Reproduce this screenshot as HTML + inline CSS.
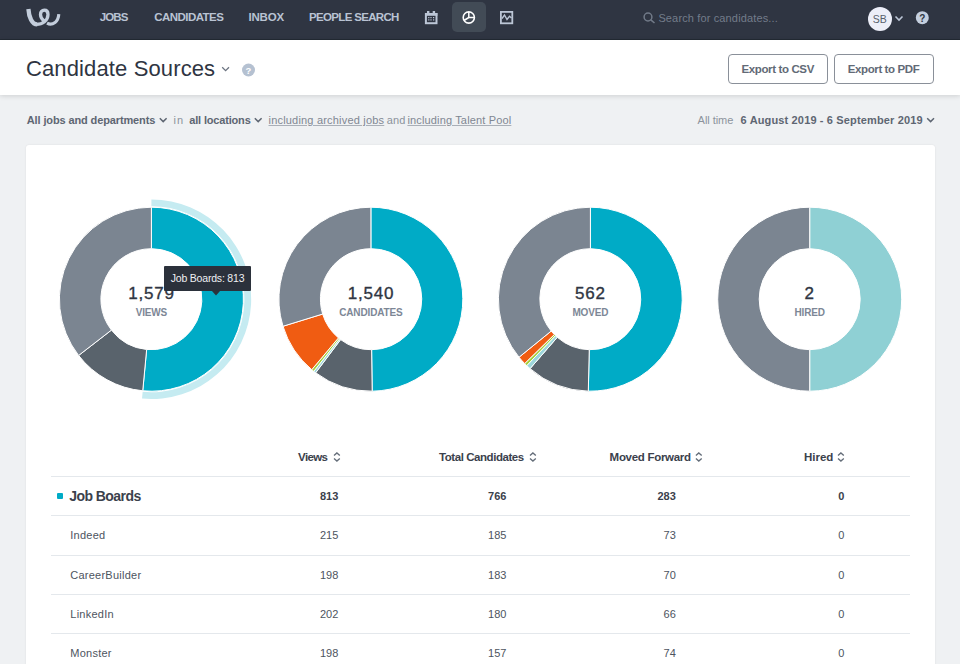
<!DOCTYPE html>
<html><head><meta charset="utf-8">
<style>
*{margin:0;padding:0;box-sizing:border-box}
html,body{width:960px;height:664px;overflow:hidden;background:#eff1f3;font-family:"Liberation Sans",sans-serif}
.a{position:absolute;white-space:nowrap;line-height:1}
#nav{position:absolute;left:0;top:0;width:960px;height:40px;background:#2f3542;border-bottom:1px solid #232a33}
#hdr{position:absolute;left:0;top:40px;width:960px;height:55px;background:#fff;box-shadow:0 1px 5px rgba(0,0,0,.14)}
.btn{position:absolute;top:54px;height:30px;border:1px solid #8a9099;border-radius:4px;background:#fff}
#card{position:absolute;left:26px;top:145.3px;width:908.5px;height:560px;background:#fff;border-radius:3px;box-shadow:0 0 2px rgba(0,0,0,.09)}
.rl{position:absolute;left:51px;width:859px;height:1px;background:#e4e8ec}
</style></head><body>
<div id="nav">
 <svg style="position:absolute;left:0;top:0" width="70" height="40" viewBox="0 0 70 40">
  <g fill="none" stroke="#c3cddb">
  <path d="M28.4,9 C28.9,17 32,24.4 37.2,24.4" stroke-width="4.3"/>
  <path d="M36.5,24.4 C42.5,24.4 48,20.5 48,14.5 C48,11.8 46.5,10.2 44.3,10.2 C42,10.2 40.5,12 40.5,14.5 C40.5,17 41.8,19 43.5,20.5" stroke-width="3.3"/>
  <path d="M47,23.2 C49,24.3 52.5,24.4 55,22.6 C57.2,20.8 58.6,17.8 58.8,14.2" stroke-width="3.1"/>
  </g>
 </svg>
 <svg style="position:absolute;left:420px;top:6px" width="24" height="24" viewBox="420 6 24 24">
  <rect x="425.9" y="14" width="10.6" height="9.2" fill="none" stroke="#bcc6d6" stroke-width="2"/>
  <rect x="425" y="13" width="12.4" height="2.8" fill="#bcc6d6"/>
  <rect x="427" y="11" width="2.4" height="2.5" fill="#bcc6d6"/>
  <rect x="432.7" y="11" width="2.4" height="2.5" fill="#bcc6d6"/>
  <g fill="#bcc6d6"><rect x="428.2" y="17" width="1.2" height="1.2"/><rect x="430.4" y="17" width="1.2" height="1.2"/><rect x="433" y="17" width="1.2" height="1.2"/><rect x="428.2" y="19.3" width="1.2" height="1.2"/><rect x="430.4" y="19.3" width="1.2" height="1.2"/><rect x="433" y="19.3" width="1.2" height="1.2"/></g>
 </svg>
 <div style="position:absolute;left:452px;top:2px;width:34px;height:30px;border-radius:5px;background:#424b56"></div>
 <svg style="position:absolute;left:452px;top:2px" width="34" height="30" viewBox="452 2 34 30">
  <circle cx="468.8" cy="17.5" r="5.6" fill="none" stroke="#fff" stroke-width="1.6"/>
  <path d="M468.8,11.9V17.5H474.4M468.8,17.5L464,20.5" fill="none" stroke="#fff" stroke-width="1.5"/>
 </svg>
 <svg style="position:absolute;left:496px;top:6px" width="22" height="24" viewBox="496 6 22 24">
  <rect x="500.9" y="11.9" width="11.4" height="11.4" fill="none" stroke="#bcc6d6" stroke-width="1.8"/>
  <path d="M502,18.5L504.5,15L507,19.5L509.5,16.2L511.5,18" fill="none" stroke="#bcc6d6" stroke-width="1.4"/>
 </svg>
 <svg style="position:absolute;left:640px;top:8px" width="20" height="20" viewBox="640 8 20 20">
  <circle cx="648" cy="17" r="3.9" fill="none" stroke="#717a88" stroke-width="1.5"/>
  <path d="M650.8,19.8L654.5,23" stroke="#717a88" stroke-width="1.6"/>
 </svg>
 <div style="position:absolute;left:868px;top:7px;width:24px;height:24px;border-radius:50%;background:#eceef8"></div>
 <svg style="position:absolute;left:890px;top:10px" width="44" height="20" viewBox="890 10 44 20">
  <path d="M895.5,16.5L899,20L902.5,16.5" fill="none" stroke="#bcc6d6" stroke-width="1.6"/>
  <circle cx="922.3" cy="17.7" r="6.5" fill="#c4cfdf"/>
  <text x="922.3" y="21.6" text-anchor="middle" font-family="Liberation Sans" font-weight="bold" font-size="10" fill="#2f3542">?</text>
 </svg>
<div class="a" style="left:99.8px;top:11.9px;font-size:11.5px;font-weight:bold;letter-spacing:-0.9px;color:#b9c3d3;">JOBS</div><div class="a" style="left:154.2px;top:11.9px;font-size:11.5px;font-weight:bold;letter-spacing:-0.544px;color:#b9c3d3;">CANDIDATES</div><div class="a" style="left:248.4px;top:11.9px;font-size:11.5px;font-weight:bold;letter-spacing:-0.163px;color:#b9c3d3;">INBOX</div><div class="a" style="left:309.0px;top:11.9px;font-size:11.5px;font-weight:bold;letter-spacing:-0.667px;color:#b9c3d3;">PEOPLE SEARCH</div><div class="a" style="left:658.4px;top:13.2px;font-size:11px;font-weight:normal;letter-spacing:0.139px;color:#737c8a;">Search for candidates...</div><div class="a" style="left:872.75px;top:14.3px;font-size:10.5px;font-weight:normal;letter-spacing:-0.05px;color:#575f6c;">SB</div>
</div>
<div id="hdr"></div>
<svg style="position:absolute;left:218px;top:62px" width="40" height="20" viewBox="218 62 40 20">
 <path d="M222.2,67.3L225.6,70.6L229,67.3" fill="none" stroke="#6b7380" stroke-width="1.3"/>
 <circle cx="248.5" cy="70" r="6.5" fill="#b5c1d1"/>
 <text x="248.5" y="73.8" text-anchor="middle" font-family="Liberation Sans" font-weight="bold" font-size="9.5" fill="#fff">?</text>
</svg>
<div class="btn" style="left:728px;width:100px"></div>
<div class="btn" style="left:834px;width:100px"></div>
<div class="a" style="left:26.0px;top:57.9px;font-size:22px;font-weight:normal;letter-spacing:0.125px;color:#2f3542;">Candidate Sources</div><div class="a" style="left:741.5px;top:63.7px;font-size:11.5px;font-weight:bold;letter-spacing:-0.375px;color:#626a76;">Export to CSV</div><div class="a" style="left:847.8px;top:63.7px;font-size:11.5px;font-weight:bold;letter-spacing:-0.4px;color:#626a76;">Export to PDF</div>
<div class="a" style="left:26.8px;top:115.1px;font-size:11px;font-weight:bold;letter-spacing:-0.126px;color:#5e6672;">All jobs and departments</div><div class="a" style="left:173.4px;top:115.1px;font-size:11px;font-weight:normal;letter-spacing:1.1px;color:#8c939c;">in</div><div class="a" style="left:189.3px;top:115.1px;font-size:11px;font-weight:bold;letter-spacing:-0.175px;color:#5e6672;">all locations</div><div class="a" style="left:268.5px;top:115.1px;font-size:11px;font-weight:normal;letter-spacing:0.195px;color:#7f8792;text-decoration:underline;text-decoration-color:#a9afb7;">including archived jobs</div><div class="a" style="left:386.8px;top:115.1px;font-size:11px;font-weight:normal;letter-spacing:0.05px;color:#8c939c;">and</div><div class="a" style="left:407.4px;top:115.1px;font-size:11px;font-weight:normal;letter-spacing:0.155px;color:#7f8792;text-decoration:underline;text-decoration-color:#a9afb7;">including Talent Pool</div><div class="a" style="left:697.6px;top:115.1px;font-size:11px;font-weight:normal;letter-spacing:-0.043px;color:#8c939c;">All time</div><div class="a" style="left:740.6px;top:115.1px;font-size:11px;font-weight:bold;letter-spacing:0.145px;color:#5e6672;">6 August 2019 - 6 September 2019</div>
<svg style="position:absolute;left:150px;top:110px" width="800" height="20" viewBox="150 110 800 20">
 <g fill="none" stroke="#5e6672" stroke-width="1.5">
 <path d="M159.8,118.3L163.2,121.6L166.6,118.3"/>
 <path d="M254.8,118.3L258.2,121.6L261.6,118.3"/>
 <path d="M927.2,118.3L930.6,121.6L934,118.3"/>
 </g>
</svg>
<div id="card"></div>
<svg style="position:absolute;left:0;top:0" width="960" height="664" viewBox="0 0 960 664">
<path d="M151.40,199.40A99.8,99.8 0 1 1 142.01,398.56L142.65,391.79A93,93 0 1 0 151.40,206.20Z" fill="#c5ebf1"/>
<path d="M151.40,207.20A92,92 0 1 1 142.74,390.79L146.65,349.48A50.5,50.5 0 1 0 151.40,248.70Z" fill="#00abc6" stroke="#fff" stroke-width="1"/>
<path d="M142.74,390.79A92,92 0 0 1 78.61,355.46L111.44,330.08A50.5,50.5 0 0 0 146.65,349.48Z" fill="#59636c" stroke="#fff" stroke-width="1"/>
<path d="M78.61,355.46A92,92 0 0 1 151.40,207.20L151.40,248.70A50.5,50.5 0 0 0 111.44,330.08Z" fill="#7b8591" stroke="#fff" stroke-width="1"/>
<path d="M370.90,207.20A92,92 0 0 1 372.18,391.19L371.61,349.70A50.5,50.5 0 0 0 370.90,248.70Z" fill="#00abc6" stroke="#fff" stroke-width="1"/>
<path d="M372.18,391.19A92,92 0 0 1 315.66,372.77L340.58,339.58A50.5,50.5 0 0 0 371.61,349.70Z" fill="#59636c" stroke="#fff" stroke-width="1"/>
<path d="M315.66,372.77A92,92 0 0 1 313.75,371.30L339.53,338.78A50.5,50.5 0 0 0 340.58,339.58Z" fill="#9cd6db" stroke="#fff" stroke-width="1"/>
<path d="M313.75,371.30A92,92 0 0 1 311.76,369.68L338.44,337.89A50.5,50.5 0 0 0 339.53,338.78Z" fill="#a4d03c" stroke="#fff" stroke-width="1"/>
<path d="M311.76,369.68A92,92 0 0 1 282.97,326.25L322.63,314.05A50.5,50.5 0 0 0 338.44,337.89Z" fill="#f05c12" stroke="#fff" stroke-width="1"/>
<path d="M282.97,326.25A92,92 0 0 1 370.90,207.20L370.90,248.70A50.5,50.5 0 0 0 322.63,314.05Z" fill="#7b8591" stroke="#fff" stroke-width="1"/>
<path d="M590.40,207.20A92,92 0 1 1 588.31,391.18L589.25,349.69A50.5,50.5 0 1 0 590.40,248.70Z" fill="#00abc6" stroke="#fff" stroke-width="1"/>
<path d="M588.31,391.18A92,92 0 0 1 530.04,368.63L557.27,337.31A50.5,50.5 0 0 0 589.25,349.69Z" fill="#59636c" stroke="#fff" stroke-width="1"/>
<path d="M530.04,368.63A92,92 0 0 1 526.72,365.60L555.45,335.65A50.5,50.5 0 0 0 557.27,337.31Z" fill="#9cd6db" stroke="#fff" stroke-width="1"/>
<path d="M526.72,365.60A92,92 0 0 1 524.67,363.57L554.32,334.53A50.5,50.5 0 0 0 555.45,335.65Z" fill="#a4d03c" stroke="#fff" stroke-width="1"/>
<path d="M524.67,363.57A92,92 0 0 1 519.00,357.22L551.21,331.05A50.5,50.5 0 0 0 554.32,334.53Z" fill="#f05c12" stroke="#fff" stroke-width="1"/>
<path d="M519.00,357.22A92,92 0 0 1 590.40,207.20L590.40,248.70A50.5,50.5 0 0 0 551.21,331.05Z" fill="#7b8591" stroke="#fff" stroke-width="1"/>
<path d="M809.70,207.20A92,92 0 0 1 809.70,391.20L809.70,349.70A50.5,50.5 0 0 0 809.70,248.70Z" fill="#8fd0d4" stroke="#fff" stroke-width="1"/>
<path d="M809.70,391.20A92,92 0 0 1 809.70,207.20L809.70,248.70A50.5,50.5 0 0 0 809.70,349.70Z" fill="#7b8591" stroke="#fff" stroke-width="1"/>
</svg>
<div class="a" style="left:51.400000000000006px;width:200px;text-align:center;top:285.1px;font-size:17px;font-weight:normal;letter-spacing:0.787px;color:#2f3542;-webkit-text-stroke:0.35px #2f3542">1,579</div><div class="a" style="left:51.400000000000006px;width:200px;text-align:center;top:307.5px;font-size:10px;font-weight:bold;letter-spacing:-0.144px;color:#7d8796">VIEWS</div><div class="a" style="left:270.9px;width:200px;text-align:center;top:285.1px;font-size:17px;font-weight:normal;letter-spacing:0.787px;color:#2f3542;-webkit-text-stroke:0.35px #2f3542">1,540</div><div class="a" style="left:270.9px;width:200px;text-align:center;top:307.5px;font-size:10px;font-weight:bold;letter-spacing:-0.144px;color:#7d8796">CANDIDATES</div><div class="a" style="left:490.4px;width:200px;text-align:center;top:285.1px;font-size:17px;font-weight:normal;letter-spacing:0.787px;color:#2f3542;-webkit-text-stroke:0.35px #2f3542">562</div><div class="a" style="left:490.4px;width:200px;text-align:center;top:307.5px;font-size:10px;font-weight:bold;letter-spacing:-0.144px;color:#7d8796">MOVED</div><div class="a" style="left:709.7px;width:200px;text-align:center;top:285.1px;font-size:17px;font-weight:normal;letter-spacing:0.787px;color:#2f3542;-webkit-text-stroke:0.35px #2f3542">2</div><div class="a" style="left:709.7px;width:200px;text-align:center;top:307.5px;font-size:10px;font-weight:bold;letter-spacing:-0.144px;color:#7d8796">HIRED</div>
<div style="position:absolute;left:164px;top:265.5px;width:87px;height:25px;background:#2b313b;border-radius:1px"></div>
<svg style="position:absolute;left:200px;top:289px" width="30" height="10" viewBox="200 289 30 10"><path d="M211.5,290.5L216,295.5L220.5,290.5Z" fill="#2b313b"/></svg>
<div class="a" style="left:170.75px;top:272.7px;font-size:10.5px;font-weight:normal;letter-spacing:-0.196px;color:#eef0f3;">Job Boards: 813</div>
<div class="a" style="left:298.1px;top:451.5px;font-size:11.5px;font-weight:bold;letter-spacing:-0.65px;color:#3b414c;">Views</div><div class="a" style="left:439.0px;top:451.5px;font-size:11.5px;font-weight:bold;letter-spacing:-0.44px;color:#3b414c;">Total Candidates</div><div class="a" style="left:609.6px;top:451.5px;font-size:11.5px;font-weight:bold;letter-spacing:-0.292px;color:#3b414c;">Moved Forward</div><div class="a" style="left:803.9px;top:451.5px;font-size:11.5px;font-weight:bold;letter-spacing:0.025px;color:#3b414c;">Hired</div>
<svg style="position:absolute;left:0;top:440px" width="960" height="30" viewBox="0 440 960 30">
 <g fill="none" stroke="#646d79" stroke-width="1.3"><path d="M334.0,455.6L336.9,452.9L339.8,455.6M334.0,458.4L336.9,461.1L339.8,458.4"/><path d="M530.0,455.6L532.9,452.9L535.8,455.6M530.0,458.4L532.9,461.1L535.8,458.4"/><path d="M695.9,455.6L698.8,452.9L701.7,455.6M695.9,458.4L698.8,461.1L701.7,458.4"/><path d="M838.0,455.6L840.9,452.9L843.8,455.6M838.0,458.4L840.9,461.1L843.8,458.4"/></g>
</svg>
<div class="rl" style="top:476px"></div>
<div class="rl" style="top:515px"></div>
<div class="rl" style="top:555px"></div>
<div class="rl" style="top:594px"></div>
<div class="rl" style="top:633px"></div>
<div style="position:absolute;left:57px;top:493px;width:6px;height:6px;border-radius:1px;background:#00abc6"></div>
<div class="a" style="left:69.2px;top:489.0px;font-size:14px;font-weight:bold;letter-spacing:-0.544px;color:#3b414c;">Job Boards</div>
<div class="a" style="left:278.3px;width:60px;text-align:right;top:490.6px;font-size:11px;font-weight:bold;color:#3b414c">813</div>
<div class="a" style="left:446.4px;width:60px;text-align:right;top:490.6px;font-size:11px;font-weight:bold;color:#3b414c">766</div>
<div class="a" style="left:615.8px;width:60px;text-align:right;top:490.6px;font-size:11px;font-weight:bold;color:#3b414c">283</div>
<div class="a" style="left:784.3px;width:60px;text-align:right;top:490.6px;font-size:11px;font-weight:bold;color:#3b414c">0</div>
<div class="a" style="left:70.3px;top:530.3px;font-size:11px;font-weight:normal;letter-spacing:0.24px;color:#4d5460;">Indeed</div>
<div class="a" style="left:278.3px;width:60px;text-align:right;top:530.3px;font-size:11px;font-weight:normal;color:#4d5460">215</div>
<div class="a" style="left:446.4px;width:60px;text-align:right;top:530.3px;font-size:11px;font-weight:normal;color:#4d5460">185</div>
<div class="a" style="left:615.8px;width:60px;text-align:right;top:530.3px;font-size:11px;font-weight:normal;color:#4d5460">73</div>
<div class="a" style="left:784.3px;width:60px;text-align:right;top:530.3px;font-size:11px;font-weight:normal;color:#4d5460">0</div>
<div class="a" style="left:70.3px;top:569.55px;font-size:11px;font-weight:normal;letter-spacing:0.24px;color:#4d5460;">CareerBuilder</div>
<div class="a" style="left:278.3px;width:60px;text-align:right;top:569.55px;font-size:11px;font-weight:normal;color:#4d5460">198</div>
<div class="a" style="left:446.4px;width:60px;text-align:right;top:569.55px;font-size:11px;font-weight:normal;color:#4d5460">183</div>
<div class="a" style="left:615.8px;width:60px;text-align:right;top:569.55px;font-size:11px;font-weight:normal;color:#4d5460">70</div>
<div class="a" style="left:784.3px;width:60px;text-align:right;top:569.55px;font-size:11px;font-weight:normal;color:#4d5460">0</div>
<div class="a" style="left:70.3px;top:608.8px;font-size:11px;font-weight:normal;letter-spacing:0.24px;color:#4d5460;">LinkedIn</div>
<div class="a" style="left:278.3px;width:60px;text-align:right;top:608.8px;font-size:11px;font-weight:normal;color:#4d5460">202</div>
<div class="a" style="left:446.4px;width:60px;text-align:right;top:608.8px;font-size:11px;font-weight:normal;color:#4d5460">180</div>
<div class="a" style="left:615.8px;width:60px;text-align:right;top:608.8px;font-size:11px;font-weight:normal;color:#4d5460">66</div>
<div class="a" style="left:784.3px;width:60px;text-align:right;top:608.8px;font-size:11px;font-weight:normal;color:#4d5460">0</div>
<div class="a" style="left:70.3px;top:648.05px;font-size:11px;font-weight:normal;letter-spacing:0.24px;color:#4d5460;">Monster</div>
<div class="a" style="left:278.3px;width:60px;text-align:right;top:648.05px;font-size:11px;font-weight:normal;color:#4d5460">198</div>
<div class="a" style="left:446.4px;width:60px;text-align:right;top:648.05px;font-size:11px;font-weight:normal;color:#4d5460">157</div>
<div class="a" style="left:615.8px;width:60px;text-align:right;top:648.05px;font-size:11px;font-weight:normal;color:#4d5460">74</div>
<div class="a" style="left:784.3px;width:60px;text-align:right;top:648.05px;font-size:11px;font-weight:normal;color:#4d5460">0</div>
</body></html>
